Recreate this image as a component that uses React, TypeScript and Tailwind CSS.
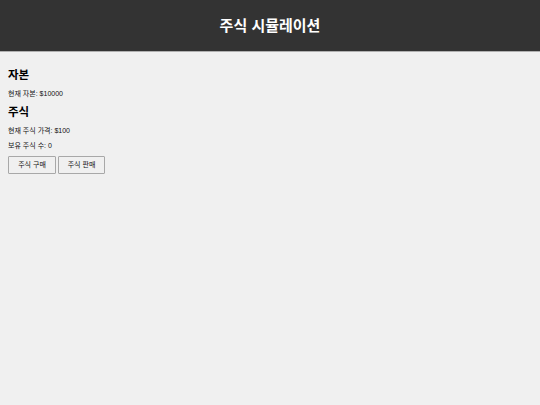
import React from "react";

export default function App() {
  const font = { fontFamily: '"Liberation Sans", "Noto Sans CJK KR", sans-serif' };
  return (
    <div className="min-h-[405px] w-full bg-[#f0f0f0] text-black" style={font}>
      <header className="flex h-[52px] items-center justify-center border-b border-[#b0b0b0] bg-[#333333]">
        <h1 className="text-[15px] font-bold leading-none text-white">주식 시뮬레이션</h1>
      </header>
      <main className="px-[8px]">
        <h2 className="mt-[16px] text-[11.5px] font-bold leading-[14px]">자본</h2>
        <p className="mt-[7px] text-[7px] leading-[9px] text-[#111]">현재 자본: $10000</p>
        <h2 className="mt-[7px] text-[11.5px] font-bold leading-[14px]">주식</h2>
        <p className="mt-[7px] text-[7px] leading-[9px] text-[#111]">현재 주식 가격: $100</p>
        <p className="mt-[6px] text-[7px] leading-[9px] text-[#111]">보유 주식 수: 0</p>
        <div className="mt-[6px] flex gap-[2px]">
          <button className="h-[18px] w-[48px] rounded-[1px] border border-[#a8a8a8] bg-[#f0f0f0] text-[7px] text-[#111]">주식 구매</button>
          <button className="h-[18px] w-[47px] rounded-[1px] border border-[#a8a8a8] bg-[#f0f0f0] text-[7px] text-[#111]">주식 판매</button>
        </div>
      </main>
    </div>
  );
}
